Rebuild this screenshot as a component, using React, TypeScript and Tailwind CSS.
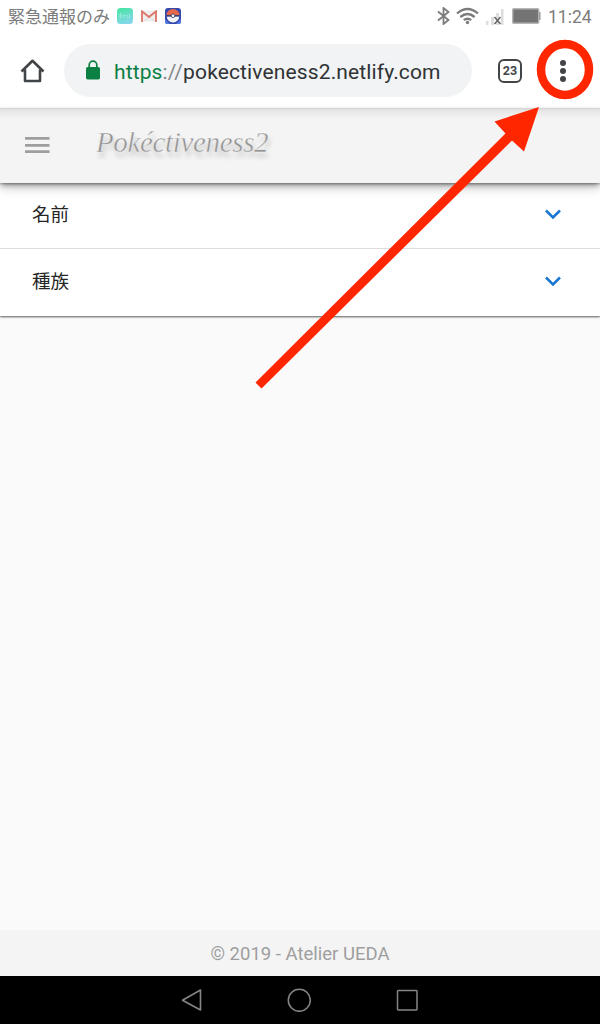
function StatusBar() {
  return (
    <div className="flex h-[34px] shrink-0 items-center px-2 text-[17px] text-[#7c7c7c]">
      <span className="w-[102px] whitespace-nowrap leading-[34px]">緊急通報のみ</span>
      <svg className="ml-[7px] -translate-y-px" width="16" height="16" viewBox="0 0 16 16">
        <defs>
          <linearGradient id="mint" x1="0" y1="0" x2="0.4" y2="1">
            <stop offset="0" stopColor="#42e69e" />
            <stop offset="1" stopColor="#82d8e7" />
          </linearGradient>
        </defs>
        <rect width="16" height="16" rx="3.5" fill="url(#mint)" />
        <path d="M5 5.8H3v4h2M3 7.8h2M6.5 9.8V7.2h2M10 7v2.8M12.5 6v2.8q0 1-1 1" fill="none" stroke="#b8f2e6" strokeWidth="0.7" />
      </svg>
      <svg className="ml-2 -translate-y-px" width="16" height="12" viewBox="0 0 16 12">
        <rect x="0.5" y="0.5" width="15" height="11" rx="1" fill="#eeeeee" />
        <path d="M3 11 8 7l5 4" fill="none" stroke="#dedede" />
        <path d="M1 12V1.3L8 7l7-5.7V12" fill="none" stroke="#dc7469" strokeWidth="1.8" />
      </svg>
      <svg className="ml-2 -translate-y-px" width="16" height="16" viewBox="0 0 16 16">
        <rect width="16" height="16" rx="3" fill="#3449ae" />
        <path d="m0 11 3 3 2 2H2q-2 0-2-2zM16 11l-3 3-2 2h3q2 0 2-2z" fill="#5278df" />
        <path d="M1.500 7.200a6.500 6.200 0 0 1 13 0z" fill="#e6684b" />
        <path d="M1.800 8.500h12.400a6.200 6 0 0 1-12.400 0" fill="#f3f4f6" />
        <path d="M1.600 7.300h12.800v1H1.600z" fill="#303657" />
        <circle cx="8" cy="7.8" r="1.8" fill="#fff" stroke="#303657" strokeWidth="0.8" />
      </svg>
      <div className="flex-1" />
      <svg className="-translate-y-px" width="13" height="18" viewBox="0 0 13 18" fill="none" stroke="#7c7c7c" strokeWidth="1.8">
        <path d="m1 4.500 10.500 8.500-5 4V1l5 4L1 13.500" />
      </svg>
      <svg className="ml-[6px] -translate-y-px" width="23" height="18" viewBox="0 0 23 18" fill="none" stroke="#7c7c7c" strokeWidth="2.3">
        <path d="M1 6.500q10.500-9 21 0M4.300 10q7.200-6 14.400 0M7.800 13.200q3.700-3 7.400 0" />
        <circle cx="11.5" cy="15.5" r="1.7" fill="#7c7c7c" stroke="none" />
      </svg>
      <svg className="ml-[6px] -translate-y-px" width="20" height="17" viewBox="0 0 20 17">
        <path d="M1 13h2.500v4H1zM6 9h3v8H6zM11 5h3v12h-3zM16 1h2.500v16H16z" fill="#dedede" />
        <path d="m9.500 9 6 7m0-7-6 7" stroke="#666" strokeWidth="1.5" />
      </svg>
      <svg className="ml-[7px] -translate-y-px" width="29" height="16" viewBox="0 0 29 16">
        <rect x="0.7" y="0.7" width="26" height="14.6" rx="1" fill="#747474" stroke="#b5b5b5" strokeWidth="1.4" />
        <path d="M27 4h1.500v8H27z" fill="#999" />
      </svg>
      <span className="ml-[7px] w-[44px] whitespace-nowrap text-[17.5px]">11:24</span>
    </div>
  );
}

function BrowserBar() {
  return (
    <div className="flex h-[74px] shrink-0 items-center">
      <svg className="ml-5" width="26" height="26" viewBox="0 0 26 26" fill="none" stroke="#424548" strokeWidth="2.6">
        <path d="M1.500 13.500 12.500 2.800l11 10.700M5 11.500V23h15V11.500" strokeLinejoin="round" />
      </svg>
      <div className="ml-[18px] flex h-[53px] w-[408px] -translate-y-px items-center rounded-full bg-[#f1f3f4]">
        <svg className="ml-[21px]" width="16" height="20" viewBox="0 0 16 20">
          <path d="M4.200 8V5a3.800 3.800 0 0 1 7.600 0v3" fill="none" stroke="#0b8043" strokeWidth="1.7" />
          <rect x="1" y="7" width="14" height="12.5" rx="1.7" fill="#0b8043" />
        </svg>
        <span className="ml-[13px] whitespace-nowrap pt-[4px] text-[21px] leading-[30px] tracking-[0.13px] text-[#303235]">
          <span className="text-[#0b8043]">https</span>
          <span className="text-[#858789]">://</span>pokectiveness2.netlify.com
        </span>
      </div>
      <div className="ml-[26px] flex size-[24px] items-center justify-center rounded-[6px] border-[2.5px] border-[#424548] text-[12.5px] font-bold leading-none text-[#424548]">
        23
      </div>
      <svg className="ml-[37px]" width="8" height="24" viewBox="0 0 8 24" fill="#424548">
        <circle cx="4" cy="4" r="3" />
        <circle cx="4" cy="12" r="3" />
        <circle cx="4" cy="20" r="3" />
      </svg>
    </div>
  );
}

function Row({ label }: { label: string }) {
  return (
    <div className="flex items-center justify-between pl-8 pr-[38px] text-[18.5px] text-[#252525]">
      <span className="pb-[2px] leading-7">{label}</span>
      <svg className="-translate-y-[1.5px]" width="18" height="12" viewBox="0 0 18 12" fill="none" stroke="#1976d2" strokeWidth="2.5">
        <path d="m2 2 7 7 7-7" />
      </svg>
    </div>
  );
}

export default function App() {
  return (
    <div className="relative flex h-[1024px] w-[600px] flex-col overflow-hidden bg-white font-['Roboto','Noto_Sans_CJK_JP',sans-serif]">
      <StatusBar />
      <BrowserBar />
      <header className="z-10 flex h-[75px] shrink-0 items-center bg-[#f4f4f4] bg-[linear-gradient(#d2d2d2_0px,#e5e5e5_2px,#f4f4f4_11px)] shadow-[0_3px_5px_-1px_rgba(0,0,0,0.38),0_6px_10px_rgba(0,0,0,0.16),0_1px_2px_rgba(0,0,0,0.25)]">
        <svg className="ml-[25px] -translate-y-px" width="25" height="18" viewBox="0 0 25 18" stroke="#9e9e9e" strokeWidth="2.7">
          <path d="M0 2.300h24.500M0 9.400h24.500M0 15.700h24.500" />
        </svg>
        <div className="ml-[46px] flex h-[50px] w-[190px] items-center whitespace-nowrap pb-[6px] font-['Liberation_Serif',cursive] text-[29px] italic leading-none tracking-[-0.35px] text-[#929292] [-webkit-text-stroke:0.45px_#f4f4f4] [text-shadow:2px_5px_5px_rgba(0,0,0,0.18)]">
          Pokéctiveness2
        </div>
      </header>
      <main className="flex-1 bg-[#fafafa]">
        <section className="grid h-[133px] grid-rows-[66px_67px] divide-y divide-[#dddddd] bg-white shadow-[0_1px_2px_rgba(0,0,0,0.65)]">
          <Row label="名前" />
          <Row label="種族" />
        </section>
      </main>
      <footer className="flex h-[46px] shrink-0 items-center justify-center bg-[#f4f4f4] pt-[3px] text-[18.5px] text-[#9e9e9e]">
        <span>© 2019 - Atelier UEDA</span>
      </footer>
      <nav className="flex h-12 shrink-0 items-center bg-black">
        <svg className="ml-[181px]" width="22" height="24" viewBox="0 0 22 24" fill="none" stroke="#858585" strokeWidth="1.6">
          <path d="M19.500 2v20L1.500 12.200z" strokeLinejoin="round" />
        </svg>
        <svg className="ml-[84px]" width="24" height="24" viewBox="0 0 24 24" fill="none" stroke="#858585" strokeWidth="1.5">
          <circle cx="12.3" cy="12.3" r="11" />
        </svg>
        <svg className="ml-[85px]" width="22" height="22" viewBox="0 0 22 22" fill="none" stroke="#858585" strokeWidth="1.5">
          <rect x="1.5" y="1.5" width="19.5" height="19.5" rx="0.7" />
        </svg>
      </nav>
      <svg className="pointer-events-none absolute inset-0 z-20" width="600" height="1024" viewBox="0 0 600 1024">
        <ellipse cx="565" cy="69.5" rx="24" ry="25.5" fill="none" stroke="#ff2600" strokeWidth="8.5" />
        <path d="m255.500 382.500 250-249-11-12L539 107l-15 44.500-12-11L261.500 388.500z" fill="#ff2600" />
      </svg>
    </div>
  );
}
